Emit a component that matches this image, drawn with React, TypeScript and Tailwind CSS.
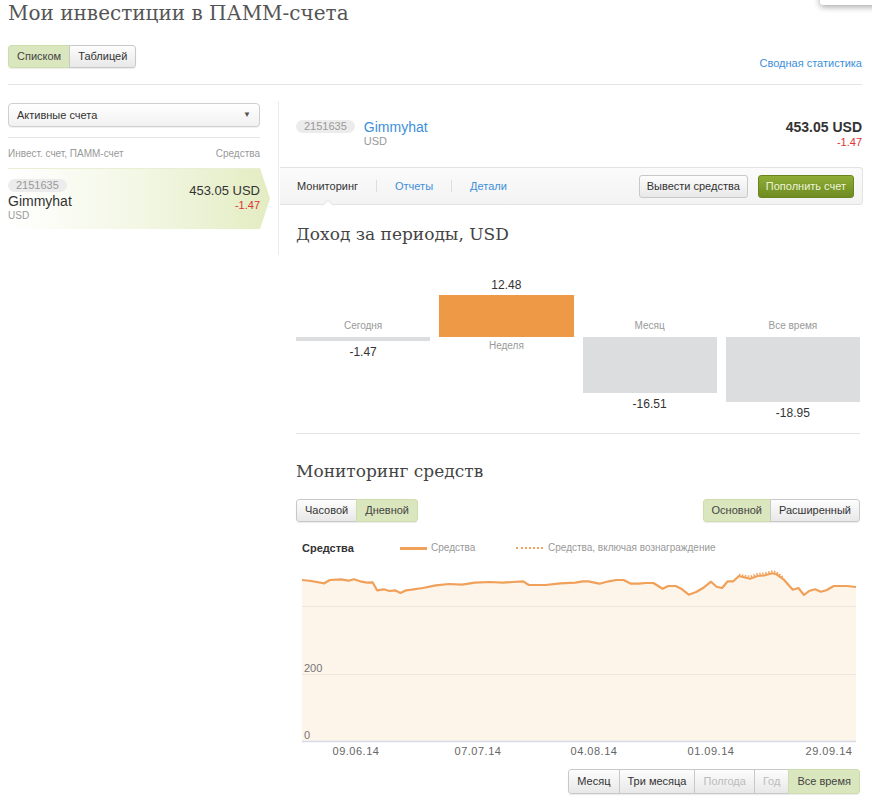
import React from 'react';

const SANS = { fontFamily: '"Liberation Sans", Arial, sans-serif' };
const SERIF = { fontFamily: '"DejaVu Serif", Georgia, serif' };

const LINE: [number, number][] = [
  [0, 10], [9.3, 11], [22.3, 13.3], [27.9, 10], [39, 9.3], [46.5, 10.7], [52, 9.3], [59.5, 11.7],
  [65, 12.7], [70.6, 12.3], [75.1, 20.3], [81.8, 19.3], [87.4, 21], [93, 20.3], [98.5, 23],
  [104.1, 20.3], [109.7, 19.7], [120.8, 18], [133.8, 15.3], [146.9, 14], [159.9, 14.7], [172.9, 12.7],
  [187.8, 12], [200.8, 12.7], [210.1, 12], [221.2, 11.3], [226.8, 15], [243.5, 15], [258.4, 13.3],
  [273.3, 12.7], [280.7, 11.3], [286.3, 11.3], [297.4, 13.7], [306.7, 11.3], [314.2, 10], [321.6, 10],
  [329, 13.7], [336.5, 13.7], [343.9, 13], [351.4, 13], [360.6, 18.7], [366.2, 16], [373.7, 16],
  [379.2, 18.7], [386.7, 24.7], [394.1, 22], [401.5, 17.7], [409, 11.7], [414.6, 16.7], [420.1, 18],
  [425.7, 11.3], [431.3, 11.3], [436.9, 6], [448, 8.7], [455.5, 6], [462.9, 5.3], [470.3, 3.3],
  [474.1, 4], [481.5, 9.3], [490.8, 19.7], [496.4, 18], [502, 25], [507.6, 20.7], [513.2, 19.3],
  [518.7, 21.7], [524.3, 20.3], [531.8, 16], [544.8, 16], [554, 17],
];

const DOTTED: [number, number][] = [
  [436.9, 4.7], [448, 6.7], [455.5, 4], [462.9, 3.3], [470.3, 1.3], [474.1, 2], [481.5, 7.7],
];

const DATES = [
  { x: 54, t: '09.06.14' },
  { x: 176, t: '07.07.14' },
  { x: 292, t: '04.08.14' },
  { x: 409, t: '01.09.14' },
  { x: 527, t: '29.09.14' },
];

const btn =
  'h-[23px] px-[8px] text-[11px] text-[#333] border border-[#c8c8c8] bg-gradient-to-b from-[#fdfdfd] to-[#e8e8e8] flex items-center';
const btnOn = 'h-[23px] px-[8px] text-[11px] text-[#444] border border-[#cfdcae] bg-[#dae6bd] flex items-center';

function Seg({ items, active, disabled = [], h = 'h-[23px]' }: { items: string[]; active: string; disabled?: string[]; h?: string }) {
  return (
    <div className="flex rounded-[3px] overflow-hidden shadow-[0_1px_1px_rgba(0,0,0,0.08)]">
      {items.map((it, i) => (
        <div
          key={it}
          className={`${it === active ? btnOn : btn} ${h} ${i > 0 ? '-ml-px' : ''} ${
            disabled.includes(it) ? '!text-[#bbb]' : ''
          } ${i === 0 ? 'rounded-l-[3px]' : ''} ${i === items.length - 1 ? 'rounded-r-[3px]' : ''}`}
        >
          {it}
        </div>
      ))}
    </div>
  );
}

function Badge({ children }: { children: React.ReactNode }) {
  return (
    <span className="block w-fit rounded-full bg-[#ececec] text-[#999] text-[11px] leading-[13px] px-[8px]">
      {children}
    </span>
  );
}

type Bar = { name: string; value: string; h: number; pos: boolean };
const BARS: Bar[] = [
  { name: 'Сегодня', value: '-1.47', h: 4, pos: false },
  { name: 'Неделя', value: '12.48', h: 42, pos: true },
  { name: 'Месяц', value: '-16.51', h: 56, pos: false },
  { name: 'Все время', value: '-18.95', h: 65, pos: false },
];

function BarCol({ b }: { b: Bar }) {
  return (
    <div className="flex flex-col">
      <div className="h-[67px] flex flex-col justify-end items-center">
        {b.pos ? (
          <>
            <div className="text-[12px] text-[#333] leading-[14px] mb-[3px]">{b.value}</div>
            <div className="w-full bg-[#ee9945]" style={{ height: b.h }} />
          </>
        ) : (
          <div className="text-[10px] text-[#999] leading-[12px] mb-[5px]">{b.name}</div>
        )}
      </div>
      <div className="flex flex-col items-center">
        {b.pos ? (
          <div className="text-[10px] text-[#999] leading-[12px] mt-[3px]">{b.name}</div>
        ) : (
          <>
            <div className="w-full bg-[#dcdddf]" style={{ height: b.h }} />
            <div className="text-[12px] text-[#333] leading-[14px] mt-[4px]">{b.value}</div>
          </>
        )}
      </div>
    </div>
  );
}

function Chart() {
  const pts = LINE.map(([x, y]) => `${x},${y}`).join(' ');
  const area = `M0,171 L${LINE.map(([x, y]) => `${x},${y}`).join(' L')} L554,171 Z`;
  const dotted = DOTTED.map(([x, y]) => `${x},${y}`).join(' ');
  return (
    <svg width="560" height="195" viewBox="0 0 560 195" className="block" style={SANS}>
      <path d={area} fill="#fdf4ea" />
      <line x1="0" y1="36.5" x2="554" y2="36.5" stroke="#ece6df" strokeWidth="1" />
      <line x1="0" y1="104.5" x2="554" y2="104.5" stroke="#ece6df" strokeWidth="1" />
      <line x1="0" y1="171.5" x2="554" y2="171.5" stroke="#d6dbe6" strokeWidth="1.5" />
      <polyline points={dotted} fill="none" stroke="#f2a45e" strokeWidth="2" strokeDasharray="1.5 1.5" />
      <polyline points={pts} fill="none" stroke="#f0a058" strokeWidth="2.2" strokeLinejoin="round" />
      <text x="2" y="102" fontSize="11" fill="#777">200</text>
      <text x="2" y="169" fontSize="11" fill="#777">0</text>
      {DATES.map((d) => (
        <text key={d.t} x={d.x} y="185" fontSize="11" fill="#666" textAnchor="middle" letterSpacing="0.5">
          {d.t}
        </text>
      ))}
    </svg>
  );
}

export default function App() {
  return (
    <div className="relative w-[872px] h-[804px] bg-white overflow-hidden pl-[8px] pr-[10px]" style={SANS}>
      <div className="absolute top-[-22px] right-[-12px] w-[64px] h-[27px] bg-white rounded-[3px] shadow-[0_2px_6px_rgba(0,0,0,0.35)]" />

      <h1 className="text-[20px] leading-[24px] text-[#555] pt-[1px]" style={SERIF}>
        Мои инвестиции в ПАММ-счета
      </h1>

      <div className="flex items-end justify-between mt-[20px] pb-[16px] border-b border-[#e3e3e3]">
        <Seg items={['Списком', 'Таблицей']} active="Списком" />
        <a className="text-[11px] text-[#3d8fd9] leading-[13px] mb-[-2px]">Сводная статистика</a>
      </div>

      <div className="flex mt-[18px]">
        {/* left column */}
        <div className="w-[262px] shrink-0">
          <div className="w-[252px] h-[24px] rounded-[4px] border border-[#cfcfcf] bg-gradient-to-b from-white to-[#f1f1f1] shadow-[0_1px_1px_rgba(0,0,0,0.06)] flex items-center justify-between pl-[8px] pr-[8px]">
            <span className="text-[11px] text-[#333]">Активные счета</span>
            <span className="text-[8px] text-[#555]">▼</span>
          </div>
          <div className="w-[252px] mt-[10px] border-t border-[#e6e6e6] flex justify-between pt-[9px] pb-[8px] text-[10px] text-[#999] leading-[13px]">
            <span>Инвест. счет, ПАММ-счет</span>
            <span>Средства</span>
          </div>
          <div
            className="w-[262px] h-[61px] bg-gradient-to-r from-white via-[#f3f7e4] to-[#e3ecc2] flex justify-between pr-[10px] pt-[10px] border-t border-[#e9efd4]"
            style={{ clipPath: 'polygon(0 0, 252px 0, 100% 50%, 252px 100%, 0 100%)' }}
          >
            <div className="flex flex-col">
              <Badge>2151635</Badge>
              <span className="text-[14px] text-[#333] leading-[17px] mt-[1px]">Gimmyhat</span>
              <span className="text-[10px] text-[#999] leading-[12px]">USD</span>
            </div>
            <div className="flex flex-col items-end mt-[4px]">
              <span className="text-[13px] text-[#333] leading-[15px]">453.05 USD</span>
              <span className="text-[11px] text-[#d33] leading-[14px]">-1.47</span>
            </div>
          </div>
        </div>

        {/* divider spacing */}
        <div className="w-[8px] shrink-0" />

        {/* right panel */}
        <div className="flex-1 min-w-0">
          <div className="border-l border-[#ececec] pb-[10px] -mt-[2px]">
            <div className="flex justify-between pl-[17px] pt-[18px] h-[66px]">
              <div className="flex items-start gap-[9px]">
                <div className="mt-[1px]">
                  <Badge>2151635</Badge>
                </div>
                <div className="flex flex-col">
                  <span className="text-[14px] text-[#3d8fd9] leading-[16px]">Gimmyhat</span>
                  <span className="text-[11px] text-[#999] leading-[12px]">USD</span>
                </div>
              </div>
              <div className="flex flex-col items-end">
                <span className="text-[14px] font-bold text-[#333] leading-[17px]">453.05 USD</span>
                <span className="text-[11px] text-[#d33] leading-[13px]">-1.47</span>
              </div>
            </div>

            <div className="relative h-[38px] ml-[1px] -mr-[1px] border border-l-0 border-[#e3e3e3] rounded-r-[4px] bg-gradient-to-b from-[#fbfbfb] to-[#f3f3f3] flex items-center justify-between pl-[17px] pr-[8px]">
              <div className="flex items-center text-[11px]">
                <span className="text-[#333]">Мониторинг</span>
                <span className="w-px h-[12px] bg-[#ddd] mx-[18px]" />
                <span className="text-[#3d8fd9]">Отчеты</span>
                <span className="w-px h-[12px] bg-[#ddd] mx-[18px]" />
                <span className="text-[#3d8fd9]">Детали</span>
              </div>
              <div className="flex gap-[10px]">
                <div className={`${btn} rounded-[3px] !px-[7px]`}>Вывести средства</div>
                <div className="h-[23px] px-[7px] text-[11px] text-[#eef3dc] rounded-[3px] border border-[#6a8520] bg-gradient-to-b from-[#8fad35] to-[#6e8c22] flex items-center">
                  Пополнить счет
                </div>
              </div>
              <div className="absolute left-[44px] bottom-[-5px] w-[8px] h-[8px] bg-white border-l border-t border-[#e3e3e3] rotate-45" />
            </div>

            <h2 className="text-[17px] text-[#444] leading-[22px] pl-[17px] mt-[18px]" style={SERIF}>
              Доход за периоды, USD
            </h2>
          </div>

          <div className="pl-[18px] pr-[2px]">
            <div className="grid grid-cols-4 gap-[9px] mt-[15px] pb-[13px] border-b border-[#e3e3e3]">
              {BARS.map((b) => (
                <BarCol key={b.name} b={b} />
              ))}
            </div>

            <h2 className="text-[17px] text-[#444] leading-[22px] mt-[26px]" style={SERIF}>
              Мониторинг средств
            </h2>

            <div className="flex justify-between mt-[17px]">
              <Seg items={['Часовой', 'Дневной']} active="Дневной" />
              <Seg items={['Основной', 'Расширенный']} active="Основной" />
            </div>

            <div className="flex items-center mt-[20px] pl-[6px] text-[10px] leading-[12px]">
              <span className="font-bold text-[11px] text-[#333] w-[98px]">Средства</span>
              <span className="w-[27px] h-[3px] bg-[#f0a058]" />
              <span className="text-[#999] ml-[4px] w-[85px]">Средства</span>
              <span className="w-[27px] border-t-2 border-dotted border-[#f2a45e]" />
              <span className="text-[#999] ml-[5px]">Средства, включая вознаграждение</span>
            </div>

            <div className="mt-[16px] ml-[6px]">
              <Chart />
            </div>

            <div className="flex justify-end mt-[4px]">
              <Seg
                items={['Месяц', 'Три месяца', 'Полгода', 'Год', 'Все время']}
                active="Все время"
                disabled={['Полгода', 'Год']}
                h="!h-[25px]"
              />
            </div>
          </div>
        </div>
      </div>
    </div>
  );
}
